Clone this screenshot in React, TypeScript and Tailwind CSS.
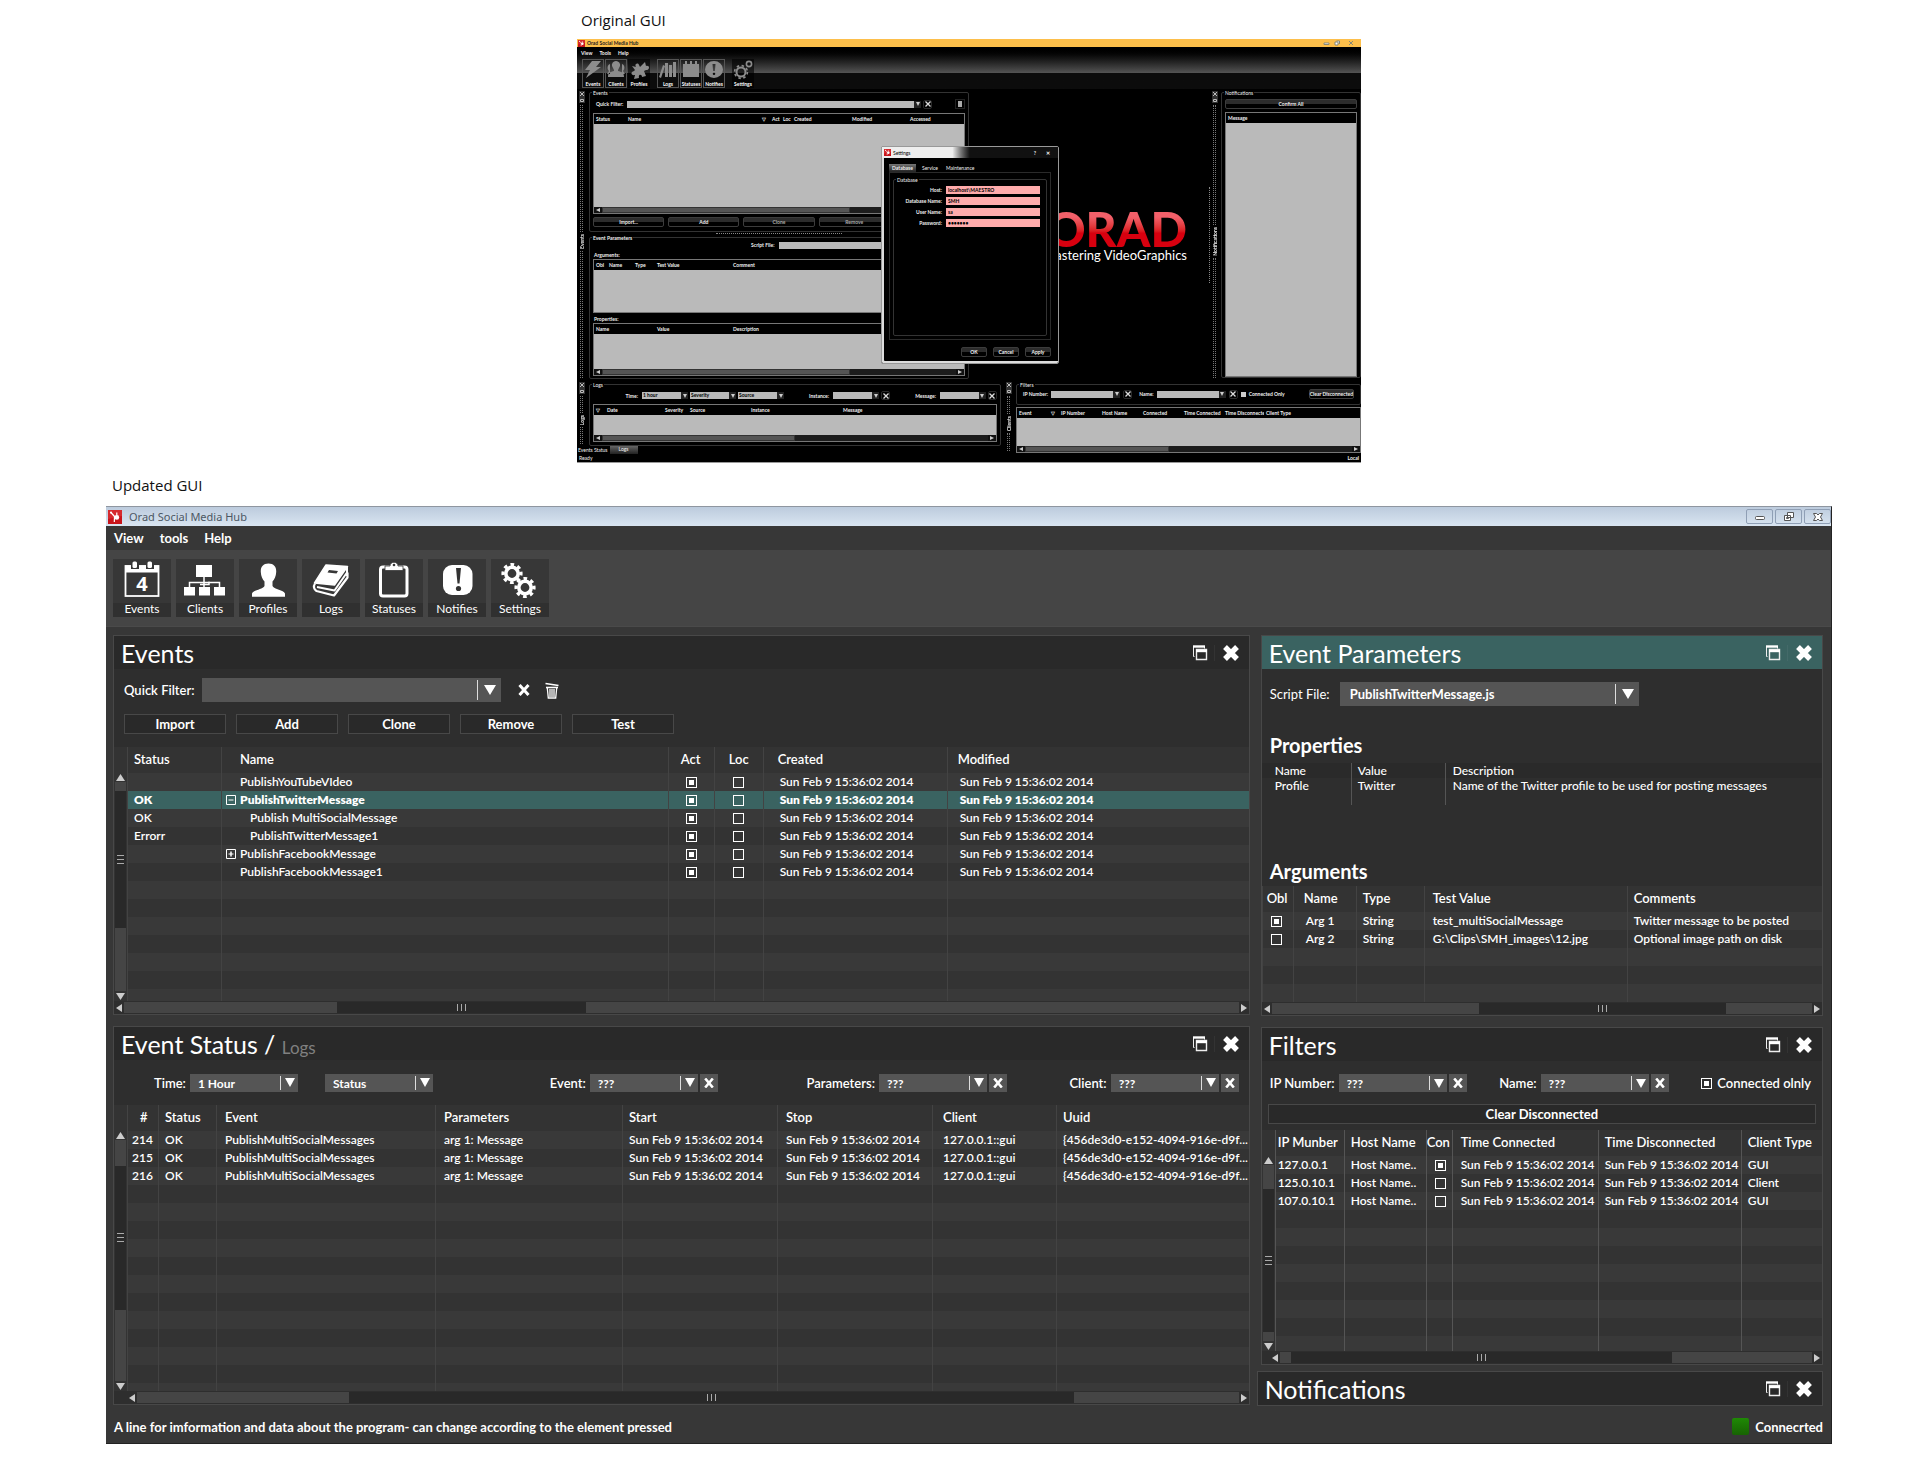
import React from "react";
import clsx from "clsx";

const STAMP = "Sun Feb 9 15:36:02 2014";

/* ---------- shared bits ---------- */

const Triangle: React.FC<{ dir: "up" | "down" | "left" | "right"; className?: string }> = ({ dir, className }) => {
  const points = {
    up: "0,10 5,0 10,10",
    down: "0,0 10,0 5,10",
    left: "10,0 10,10 0,5",
    right: "0,0 10,5 0,10",
  };
  return (
    <svg viewBox="0 0 10 10" preserveAspectRatio="none" className={clsx("shrink-0 fill-current", className)}>
      <polygon points={points[dir]} />
    </svg>
  );
};

const BrandIcon: React.FC<{ className?: string }> = ({ className }) => (
  <svg viewBox="0 0 14 14" className={className}>
    <rect width="14" height="14" fill="#c8141b" />
    <path d="M0 0h14v6L0 9z" fill="#e0393c" opacity=".6" />
    <path d="M3 2.5l3.5 4M6.500 6.500l-.2 5.500M8.800 2.500v3M6 6.500h2" stroke="#fff" strokeWidth="1.2" fill="none" />
    <circle cx="8.8" cy="7.4" r="2.4" fill="#fff" />
    <circle cx="3" cy="2.6" r="1.1" fill="#fff" />
  </svg>
);

const Combo: React.FC<{ id: string; label: string; value: string; className?: string; big?: boolean }> = ({
  id,
  label,
  value,
  className,
  big,
}) => (
  <div className={clsx("relative bg-[#555]", big ? "h-6" : "h-[18px]", className)}>
    <select
      id={id}
      aria-label={label}
      className={clsx(
        "block size-full appearance-none truncate bg-transparent pr-6 font-bold text-white outline-none",
        big ? "pl-2.5 text-[13px]" : "pl-2 text-[12px]"
      )}
    >
      <option>{value}</option>
    </select>
    <span
      className={clsx(
        "pointer-events-none absolute inset-y-0.5 right-0 flex items-center border-l border-[#ddd] text-white",
        big ? "w-6 pl-1.5" : "w-[18px] pl-1"
      )}
    >
      <Triangle dir="down" className={big ? "h-[10px] w-[12px]" : "h-[9px] w-[10px]"} />
    </span>
  </div>
);

const ClearButton: React.FC<{ label: string }> = ({ label }) => (
  <button aria-label={label} className="ml-0.5 flex h-[18px] w-[18px] items-center justify-center bg-[#555]">
    <svg viewBox="0 0 10 10" className="size-[10px]" stroke="#fff" strokeWidth="2.6">
      <path d="M1.2 .5l7.6 9M8.8 .5l-7.6 9" />
    </svg>
  </button>
);

const FilterField: React.FC<{ id: string; label: string }> = ({ id, label }) => (
  <div className="flex items-center">
    <label htmlFor={id} className="mr-1 text-[13px] leading-[18px] font-semibold whitespace-nowrap">
      {label}:
    </label>
    <Combo id={id} label={label} value="???" className="w-[108px]" />
    <ClearButton label={`Clear ${label}`} />
  </div>
);

const Check: React.FC<{ on?: boolean; label?: string; id?: string }> = ({ on, label, id }) => (
  <input
    id={id}
    type="checkbox"
    aria-label={label}
    defaultChecked={on}
    className="block size-[11px] appearance-none border border-white bg-clip-content p-[2px] checked:bg-white"
  />
);

const VScroll: React.FC<{ before: string; thumb: string; after: string }> = ({ before, thumb, after }) => (
  <div className="flex w-[13px] shrink-0 flex-col items-center px-px text-[#ccc]">
    <div className="h-[26px]" />
    <div className="flex h-[9px] items-center">
      <Triangle dir="up" className="h-[7px] w-[9px]" />
    </div>
    <div className={clsx("w-full bg-[#454545]", before)} />
    <div className={clsx("flex w-full flex-col items-center justify-center gap-[3px] bg-[#292929]", thumb)}>
      <i className="h-px w-[7px] bg-[#aaa]" />
      <i className="h-px w-[7px] bg-[#aaa]" />
      <i className="h-px w-[7px] bg-[#aaa]" />
    </div>
    <div className={clsx("w-full bg-[#454545]", after)} />
    <div className="flex h-[10px] items-center">
      <Triangle dir="down" className="h-[7px] w-[9px]" />
    </div>
  </div>
);

const HScroll: React.FC<{ before: string; thumb: string; after: string; className?: string }> = ({
  before,
  thumb,
  after,
  className,
}) => (
  <div className={clsx("mt-px mb-px flex h-[11px] items-center text-[#ccc]", className)}>
    <Triangle dir="left" className="mx-0.5 h-[8px] w-[6px]" />
    <div className={clsx("h-full bg-[#454545]", before)} />
    <div className={clsx("flex h-full items-center justify-center gap-[3px] bg-[#292929]", thumb)}>
      <i className="h-[7px] w-px bg-[#aaa]" />
      <i className="h-[7px] w-px bg-[#aaa]" />
      <i className="h-[7px] w-px bg-[#aaa]" />
    </div>
    <div className={clsx("h-full bg-[#454545]", after)} />
    <Triangle dir="right" className="mx-0.5 h-[8px] w-[6px]" />
  </div>
);

const Panel: React.FC<{ title: React.ReactNode; active?: boolean; children?: React.ReactNode }> = ({
  title,
  active,
  children,
}) => (
  <section className="border border-[#484848] bg-[#2e2e2e]">
    <header className={clsx("flex h-[33px] items-center justify-between pr-2.5 pl-[7px]", active ? "bg-[#3a6361]" : "bg-[#292929]")}>
      <h2 className="text-[25px] leading-8 whitespace-nowrap">{title}</h2>
      <div className="flex items-center gap-1.5">
        <button aria-label="Restore">
          <svg viewBox="0 0 16 16" className="size-4" fill="none" stroke="#eee">
            <path d="M2.5 11.5h-1v-10h11v2" />
            <path d="M1 1.5h12" strokeWidth="2.4" stroke="#fff" />
            <path d="M4.5 4.5h10v10h-10z" strokeWidth="1.4" />
            <path d="M4 6h11" strokeWidth="2.4" stroke="#fff" />
          </svg>
        </button>
        <button aria-label="Close" className="border-l border-[#ffffff0d] pl-2">
          <svg viewBox="0 0 16 16" className="size-4" stroke="#fff" strokeWidth="5.4">
            <path d="M2 2l12 12M14 2L2 14" />
          </svg>
        </button>
      </div>
    </header>
    {children}
  </section>
);

type Column = { title: string; width?: string; pad?: string; head?: string };

type GridProps = {
  columns: Column[];
  rows: React.ReactNode[][];
  blank: number;
  tail?: string;
  selected?: number;
  strong?: boolean;
};

const GridTable: React.FC<GridProps> = ({ columns, rows, blank, tail, selected, strong }) => {
  const line = strong ? "border-[#555]" : "border-[#434343]";
  return (
    <table className="w-full table-fixed border-separate border-spacing-0 text-left">
      <colgroup>
        {columns.map((c, i) => (
          <col key={i} className={c.width} />
        ))}
      </colgroup>
      <thead>
        <tr className="h-[26px] bg-[#333]">
          {columns.map((c, i) => (
            <th
              key={i}
              className={clsx("border-l p-0 pb-0.5 text-[13px] leading-5 font-semibold whitespace-nowrap", line, c.head ?? c.pad)}
            >
              {c.title}
            </th>
          ))}
        </tr>
      </thead>
      <tbody className="text-[12px] leading-[18px]">
        {rows.map((row, r) => (
          <tr
            key={r}
            className={clsx(
              "h-[18px]",
              r === selected ? "bg-[#3a6361] font-extrabold" : "font-semibold odd:bg-[#393939] even:bg-[#333]"
            )}
          >
            {row.map((cell, i) => (
              <td key={i} className={clsx("border-l p-0 whitespace-nowrap", line, columns[i].pad)}>
                {cell}
              </td>
            ))}
          </tr>
        ))}
        {Array.from({ length: blank }, (_, r) => (
          <tr key={`blank-${r}`} className="h-[18px] odd:bg-[#393939] even:bg-[#333]">
            {columns.map((_, i) => (
              <td key={i} className={clsx("border-l p-0", line)} />
            ))}
          </tr>
        ))}
        {tail && (
          <tr className={clsx("odd:bg-[#393939] even:bg-[#333]", tail)}>
            {columns.map((_, i) => (
              <td key={i} className={clsx("border-l p-0", line)} />
            ))}
          </tr>
        )}
      </tbody>
    </table>
  );
};

/* ---------- toolbar icons, drawn on a 58x44 tile ---------- */

const gear = (cx: number, cy: number) => (
  <g fill="none" stroke="#fff">
    <circle cx={cx} cy={cy} r="6.2" strokeWidth="3.6" />
    <circle cx={cx} cy={cy} r="9" strokeWidth="3.2" strokeDasharray="3.53 3.54" transform={`rotate(-11 ${cx} ${cy})`} />
  </g>
);

const icons: Record<string, React.ReactNode> = {
  Events: (
    <>
      <rect x="12.5" y="7" width="33" height="30" fill="none" stroke="#fff" strokeWidth="1.8" />
      <path d="M12 6.500h34v7H12z" fill="#fff" />
      <path d="M18 3h8v7h-8zM33 3h8v7h-8z" fill="#373737" />
      <rect x="19.500" y="2.500" width="4.500" height="6.500" rx="1.500" fill="#fff" />
      <rect x="34.500" y="2.500" width="4.500" height="6.500" rx="1.500" fill="#fff" />
      <text x="29" y="32" textAnchor="middle" fontSize="20" fontWeight="700" fontFamily="Open Sans, sans-serif" fill="#fff">
        4
      </text>
    </>
  ),
  Clients: (
    <g fill="#fff">
      <path d="M20 6h16v12H20zM8 28h11v8.500H8zM23 28h11v8.500H23zM38 28h11v8.500H38z" />
      <path d="M28 18v10M13.500 28v-4.500h30V28M24 25.500h9v-3" stroke="#fff" strokeWidth="1.500" fill="none" />
    </g>
  ),
  Profiles: (
    <path
      d="M29.500 4.500c5.500 0 8 3.500 7.700 8.500-.2 4-1.700 7.500-3.700 9.500v4.500c2 3.500 11 4 12.500 7.500v3.200H13V34.500c1.500-3.500 10.500-4 12.500-7.500v-4.500c-2-2-3.500-5.500-3.700-9.500-.3-5 2.200-8.500 7.700-8.500z"
      fill="#fff"
    />
  ),
  Logs: (
    <g strokeLinejoin="round">
      <path d="M24 6l21.500 1.500-13 18.500L12.500 24z" fill="#fff" stroke="#fff" strokeWidth="1.500" />
      <path d="M27 11l9 1-1.500 2.500-9-1z" fill="#373737" />
      <path d="M13 24.500c-2 3-1 6 1.500 7.500L32 36.500l13.500-18v-5" fill="none" stroke="#fff" strokeWidth="2.200" />
      <path d="M15 28l17.500 3.500L45 13.500M45 8v9" fill="none" stroke="#fff" strokeWidth="2" />
    </g>
  ),
  Statuses: (
    <>
      <rect x="15.500" y="8" width="26.500" height="29" rx="2.500" fill="none" stroke="#fff" strokeWidth="3" />
      <path d="M20 7h5c0-5 8-5 8 0h5v4.500H20z" fill="#fff" stroke="#373737" strokeWidth=".8" />
      <circle cx="29" cy="6" r="1.300" fill="#373737" />
    </>
  ),
  Notifies: (
    <>
      <rect x="15" y="6" width="29.500" height="30" rx="9" fill="#fff" />
      <path d="M28 9h5l-1.500 15.500h-2z" fill="#333" />
      <circle cx="30.500" cy="29.500" r="2.600" fill="#333" />
    </>
  ),
  Settings: (
    <>
      {gear(21, 14.5)}
      {gear(34, 28.5)}
    </>
  ),
};

/* ---------- updated GUI ---------- */

const eventRows: [string, string, "leaf" | "open" | "closed" | "child"][] = [
  ["", "PublishYouTubeVIdeo", "leaf"],
  ["OK", "PublishTwitterMessage", "open"],
  ["OK", "Publish MultiSocialMessage", "child"],
  ["Errorr", "PublishTwitterMessage1", "child"],
  ["", "PublishFacebookMessage", "closed"],
  ["", "PublishFacebookMessage1", "leaf"],
];

const TreeName: React.FC<{ name: string; kind: string }> = ({ name, kind }) => (
  <div className={clsx("flex items-center", kind === "child" && "pl-2.5")}>
    <span className="w-[14px]">
      {(kind === "open" || kind === "closed") && (
        <button aria-label={`Toggle ${name}`} className="block">
          <svg viewBox="0 0 10 10" className="size-[10px]" fill="none" stroke="#fff">
            <path d="M.5 .5h9v9h-9zM2.500 5h5" />
            {kind === "closed" && <path d="M5 2.500v5" strokeWidth="1.500" />}
          </svg>
        </button>
      )}
    </span>
    {name}
  </div>
);

const EventsPanel: React.FC = () => (
  <Panel title="Events">
    <div className="h-[78px] px-2.5 pt-[9px]">
      <div className="flex items-center">
        <label htmlFor="quick-filter" className="w-[78px] text-[13px] font-semibold whitespace-nowrap">
          Quick Filter:
        </label>
        <Combo id="quick-filter" label="Quick Filter" value="" big className="w-[299px]" />
        <button aria-label="Clear filter" className="ml-[17px]">
          <svg viewBox="0 0 12 12" className="size-3" stroke="#fff" strokeWidth="3">
            <path d="M1.500 1l9 10M10.500 1l-9 10" />
          </svg>
        </button>
        <button aria-label="Delete" className="ml-[15px]">
          <svg viewBox="0 0 14 17" className="h-[17px] w-[14px]" fill="none" stroke="#fff">
            <path d="M.5 1.500l13 2" strokeWidth="1.600" />
            <path d="M1 5.500h12" strokeWidth="1.600" />
            <path d="M2.300 6l1 10h7.400l1-10M5 7v8M7 7v8M9 7v8" strokeWidth="1.300" />
          </svg>
        </button>
      </div>
      <div className="mt-3 flex gap-2.5">
        {["Import", "Add", "Clone", "Remove", "Test"].map((b) => (
          <button key={b} className="h-5 w-[102px] border border-[#484848] bg-[#292929] text-[13px] leading-4 font-bold">
            {b}
          </button>
        ))}
      </div>
    </div>
    <div className="flex bg-[#333]">
      <VScroll before="grow-[9]" thumb="grow-[134]" after="grow-[66]" />
      <GridTable
        selected={1}
        blank={6}
        tail="h-3"
        columns={[
          { title: "Status", width: "w-[94px]", pad: "pl-1.5" },
          { title: "Name", pad: "pl-1", head: "pl-[18px]" },
          { title: "Act", width: "w-[46px]", pad: "pl-[17px]", head: "pl-3" },
          { title: "Loc", width: "w-[49px]", pad: "pl-[18px]", head: "pl-3.5" },
          { title: "Created", width: "w-[184px]", pad: "pl-4", head: "pl-3.5" },
          { title: "Modified", width: "w-[302px]", pad: "pl-3", head: "pl-2.5" },
        ]}
        rows={eventRows.map(([status, name, kind]) => [
          status,
          <TreeName name={name} kind={kind} />,
          <Check on label={`${name} act`} />,
          <Check label={`${name} loc`} />,
          STAMP,
          STAMP,
        ])}
      />
    </div>
    <HScroll before="grow-[215]" thumb="grow-[242]" after="grow-[659]" />
  </Panel>
);

const StatusPanel: React.FC = () => (
  <Panel
    title={
      <>
        Event Status /{" "}
        <a href="#logs" className="text-[17px] leading-none text-[#808080]">
          Logs
        </a>
      </>
    }
  >
    <div className="flex h-[45px] items-center pr-2.5 pl-10">
      <label htmlFor="time" className="mr-1 text-[13px] leading-[18px] font-semibold">
        Time:
      </label>
      <Combo id="time" label="Time" value="1 Hour" className="w-[108px]" />
      <Combo id="status" label="Status" value="Status" className="ml-[27px] w-[108px]" />
      <span className="grow-[116]" />
      <FilterField id="event" label="Event" />
      <span className="grow-[88]" />
      <FilterField id="parameters" label="Parameters" />
      <span className="grow-[62]" />
      <FilterField id="client" label="Client" />
    </div>
    <div className="flex bg-[#333]">
      <VScroll before="grow-[27]" thumb="grow-[141]" after="grow-[74]" />
      <GridTable
        blank={11}
        tail="h-2"
        columns={[
          { title: "#", width: "w-[31px]", pad: "pl-1", head: "pl-3" },
          { title: "Status", width: "w-[58px]", pad: "pl-1.5" },
          { title: "Event", width: "w-[219px]", pad: "pl-2" },
          { title: "Parameters", width: "w-[187px]", pad: "pl-2" },
          { title: "Start", width: "w-[155px]", pad: "pl-1.5" },
          { title: "Stop", width: "w-[155px]", pad: "pl-2" },
          { title: "Client", width: "w-[124px]", pad: "pl-2.5" },
          { title: "Uuid", pad: "pl-1.5" },
        ]}
        rows={["214", "215", "216"].map((n) => [
          n,
          "OK",
          "PublishMultiSocialMessages",
          "arg 1: Message",
          STAMP,
          STAMP,
          "127.0.0.1::gui",
          "{456de3d0-e152-4094-916e-d9f...",
        ])}
      />
    </div>
    <HScroll before="grow-[215]" thumb="grow-[725]" after="grow-[167]" className="pl-[13px]" />
  </Panel>
);

const ParametersPanel: React.FC = () => (
  <Panel title="Event Parameters" active>
    <div className="h-[217px] pt-[13px]">
      <div className="flex items-center pl-2">
        <label htmlFor="script-file" className="w-[70px] text-[13px] whitespace-nowrap">
          Script File:
        </label>
        <Combo id="script-file" label="Script File" value="PublishTwitterMessage.js" big className="w-[299px]" />
      </div>
      <h3 className="mt-[27px] pl-2 text-[20px] leading-6 font-bold">Properties</h3>
      <table className="mt-1.5 w-full table-fixed border-separate border-spacing-0 text-left text-[12px] leading-[15px] font-medium">
        <colgroup>
          <col className="w-[89px]" />
          <col className="w-[94px]" />
          <col />
        </colgroup>
        <thead>
          <tr className="bg-[#2a2a2a]">
            <th className="p-0 pl-[13px] font-medium">Name</th>
            <th className="border-l border-[#555] p-0 pl-1.5 font-medium">Value</th>
            <th className="border-l border-[#555] p-0 pl-[7px] font-medium">Description</th>
          </tr>
        </thead>
        <tbody>
          <tr className="h-[27px] align-top">
            <td className="p-0 pl-[13px]">Profile</td>
            <td className="border-l border-[#555] p-0 pl-1.5">Twitter</td>
            <td className="border-l border-[#555] p-0 pl-[7px]">Name of the Twitter profile to be used for posting messages</td>
          </tr>
        </tbody>
      </table>
      <h3 className="mt-[54px] pl-2 text-[20px] leading-6 font-bold">Arguments</h3>
    </div>
    <GridTable
      blank={3}
      columns={[
        { title: "Obl", width: "w-[31px]", pad: "pl-2", head: "pl-1" },
        { title: "Name", width: "w-[63px]", pad: "pl-3", head: "pl-2.5" },
        { title: "Type", width: "w-[68px]", pad: "pl-1.5" },
        { title: "Test Value", width: "w-[203px]", pad: "pl-2" },
        { title: "Comments", pad: "pl-1.5" },
      ]}
      rows={[
        [<Check on label="Arg 1 obligatory" />, "Arg 1", "String", "test_multiSocialMessage", "Twitter message to be posted"],
        [<Check label="Arg 2 obligatory" />, "Arg 2", "String", "G:\\Clips\\SMH_images\\12.jpg", "Optional image path on disk"],
      ]}
    />
    <HScroll before="grow-[211]" thumb="grow-[242]" after="grow-[88]" />
  </Panel>
);

const FiltersPanel: React.FC = () => (
  <Panel title="Filters">
    <div className="h-[69px] pt-[13px] pr-1.5 pl-1.5">
      <div className="flex items-center justify-between pr-[5px] pl-0.5">
        <FilterField id="ip-number" label="IP Number" />
        <FilterField id="client-name" label="Name" />
        <div className="flex items-center gap-[5px]">
          <Check on id="connected-only" />
          <label htmlFor="connected-only" className="text-[13px] leading-[18px] font-semibold whitespace-nowrap">
            Connected olnly
          </label>
        </div>
      </div>
      <button className="mt-3 h-5 w-full border border-[#484848] bg-[#292929] text-[13px] leading-4 font-bold">
        Clear Disconnected
      </button>
    </div>
    <div className="flex bg-[#333]">
      <VScroll before="grow-[25]" thumb="grow-[142]" after="grow-[10]" />
      <GridTable
        strong
        blank={7}
        tail="h-[15px]"
        columns={[
          { title: "IP Munber", width: "w-[69px]", pad: "pl-0.5" },
          { title: "Host Name", width: "w-[82px]", pad: "pl-1.5" },
          { title: "Con", width: "w-[26px]", pad: "pl-2", head: "pl-0" },
          { title: "Time Connected", width: "w-[146px]", pad: "pl-2" },
          { title: "Time Disconnected", width: "w-[143px]", pad: "pl-1.5" },
          { title: "Client Type", pad: "pl-1.5" },
        ]}
        rows={[
          ["127.0.0.1", "Host Name..", <Check on label="127.0.0.1 connected" />, STAMP, STAMP, "GUI"],
          ["125.0.10.1", "Host Name..", <Check label="125.0.10.1 connected" />, STAMP, STAMP, "Client"],
          ["107.0.10.1", "Host Name..", <Check label="107.0.10.1 connected" />, STAMP, STAMP, "GUI"],
        ]}
      />
    </div>
    <HScroll before="grow-[12]" thumb="grow-[378]" after="grow-[142]" className="pl-2" />
  </Panel>
);

const UpdatedGui: React.FC = () => (
  <div className="border-t border-r border-b border-t-[#8f96a0] border-r-[#222] border-b-[#222] bg-[#373737] font-['Lato',sans-serif] text-white">
    <div className="flex h-[19px] items-center justify-between bg-linear-to-b from-[#bccbdd] to-[#d9e5f1] pl-0.5">
      <div className="flex items-center gap-[7px]">
        <BrandIcon className="size-[14px]" />
        <span className="font-['Noto_Sans',sans-serif] text-[11px] leading-4 text-[#4c5763]">Orad Social Media Hub</span>
      </div>
      <div className="flex gap-0.5 text-[#555]">
        {["Minimize", "Restore", "Close"].map((b) => (
          <button key={b} aria-label={b} className="flex h-[15px] w-[27px] items-center justify-center rounded-xs border border-[#8f9fb5]">
            <svg viewBox="0 0 12 10" className="h-[10px] w-3" fill="#fff" stroke="#555">
              {b === "Minimize" && <rect x="1.500" y="4.500" width="9" height="3" rx="1" />}
              {b === "Restore" && <path d="M4.500 .5h6v5h-6zM1.500 3.500h6v5h-6zM3.500 5.500h2v1h-2z" />}
              {b === "Close" && <path d="M1.500 1.500h3L6 3l1.500-1.500h3L8.500 5l2 3.500h-3L6 7 4.500 8.500h-3l2-3.500z" />}
            </svg>
          </button>
        ))}
      </div>
    </div>
    <nav className="flex h-6 items-center gap-4 pl-2 text-[13px] font-bold">
      <a href="#view">View</a>
      <a href="#tools">tools</a>
      <a href="#help">Help</a>
    </nav>
    <div className="flex h-[77px] gap-[5px] border-b border-[#4a4a4a] bg-[#454545] pt-[9px] pl-[7px]">
      {Object.keys(icons).map((name) => (
        <button key={name} className="flex size-[58px] flex-col bg-[#373737]">
          <svg viewBox="0 0 58 44" className="h-11 w-[58px]">
            {icons[name]}
          </svg>
          <span className="block h-[14px] w-full bg-[#303030] text-center text-[12px] leading-3">{name}</span>
        </button>
      ))}
    </div>
    <div className="grid grid-cols-[1138fr_567fr] gap-[7px] pt-2 pr-2 pl-[7px]">
      <div className="flex min-w-0 flex-col gap-[11px]">
        <EventsPanel />
        <StatusPanel />
      </div>
      <div className="flex min-w-0 flex-col gap-1.5">
        <div className="flex flex-col gap-[11px] pl-1">
          <ParametersPanel />
          <FiltersPanel />
        </div>
        <Panel title="Notifications" />
      </div>
    </div>
    <footer className="flex h-[37px] items-center justify-between pt-1 pr-2 pl-2 text-[13px] font-bold">
      <p>A line for imformation and data about the program- can change according to the element pressed</p>
      <p className="flex items-center gap-1.5">
        <i className="h-[17px] w-[17px] rounded-xs bg-linear-to-b from-[#1f8a05] to-[#176303]" />
        Connecrted
      </p>
    </footer>
  </div>
);

/* ---------- original GUI (small preview) ---------- */

const Group: React.FC<{ title: string; className?: string; children?: React.ReactNode }> = ({ title, className, children }) => (
  <fieldset className={clsx("relative min-w-0 rounded-xs border border-[#333]", className)}>
    <legend className="absolute -top-1 left-0.5 bg-black px-px leading-2">{title}</legend>
    {children}
  </fieldset>
);

const MiniScroll: React.FC<{ thumb: string }> = ({ thumb }) => (
  <div className="flex h-[6px] items-center bg-[#111] text-[#ccc]">
    <Triangle dir="left" className="mx-0.5 size-1" />
    <div className="flex h-full flex-1 bg-[#1c1c1c]">
      <div className={clsx("h-full border border-[#333] bg-[#555]", thumb)} />
    </div>
    <Triangle dir="right" className="mx-0.5 size-1" />
  </div>
);

const MiniTable: React.FC<{ heads: [string, string][]; body: string; thumb?: string; className?: string }> = ({
  heads,
  body,
  thumb,
  className,
}) => (
  <div className={clsx("overflow-hidden border border-[#777]", className)}>
    <table className="w-full table-fixed text-left">
      <thead>
        <tr className="h-[10px] bg-black leading-2">
          {heads.map(([h, w], i) => (
            <th key={i} className={clsx("overflow-hidden p-0 pl-0.5 font-bold whitespace-nowrap", w)}>
              {h}
            </th>
          ))}
        </tr>
      </thead>
      <tbody>
        <tr className={clsx("bg-[#bababa]", body)}>
          <td colSpan={heads.length} className="p-0" />
        </tr>
      </tbody>
    </table>
    {thumb && <MiniScroll thumb={thumb} />}
  </div>
);

const MiniSelect: React.FC<{ label: string; value?: string; className?: string }> = ({ label, value = "", className }) => (
  <div className={clsx("flex h-[7px]", className)}>
    <select aria-label={label} className="min-w-0 flex-1 appearance-none bg-[#bababa] pl-px leading-[7px] font-bold text-black">
      <option>{value}</option>
    </select>
    <span className="flex w-[7px] items-center justify-center bg-[#222] text-[#ccc]">
      <Triangle dir="down" className="size-1" />
    </span>
  </div>
);

const MiniX: React.FC = () => (
  <button aria-label="Clear" className="flex h-[9px] w-[9px] items-center justify-center rounded-xs border border-[#2a2a2a]">
    <svg viewBox="0 0 6 6" className="size-[6px]" stroke="#ddd" strokeWidth="1.300">
      <path d="M.5 .5l5 5M5.500 .5l-5 5" />
    </svg>
  </button>
);

const MiniButton: React.FC<{ children: React.ReactNode; className?: string; dim?: boolean }> = ({ children, className, dim }) => (
  <button
    className={clsx(
      "h-[10px] rounded-xs border border-[#3c3c3c] bg-linear-to-b from-[#2c2c2c] from-50% to-black to-50% leading-2 font-bold",
      dim && "text-[#aaa]",
      className
    )}
  >
    {children}
  </button>
);

const Dock: React.FC<{ title: string; className?: string }> = ({ title, className }) => (
  <div className={clsx("flex w-[9px] shrink-0 flex-col items-center gap-0.5 py-0.5", className)}>
    <svg viewBox="0 0 6 12" className="h-3 w-1.5 bg-[#333]" fill="none" stroke="#bbb">
      <path d="M1 1l4 4M5 1L1 5M1.500 8.500h3v2h-3z" />
    </svg>
    <i className="w-[3px] flex-1 border-x border-dotted border-[#777]" />
    <span className="rotate-180 leading-2 font-bold [writing-mode:vertical-rl]">{title}</span>
    <i className="w-[3px] flex-1 border-x border-dotted border-[#777]" />
  </div>
);

const miniIcons: [string, React.ReactNode][] = [
  ["Events", <path d="M9 1h9l-5 6h5L3 18l4-8H2z" />],
  [
    "Clients",
    <path d="M10 1a4 4 0 014 5l-2 4v1c3 1 6 1 6 6H2c0-5 3-5 6-6v-1L6 6a4 4 0 014-5zM4 4c-3 1-3 5-1 7l-2 3h3zM16 4c3 1 3 5 1 7l2 3h-3z" />,
  ],
  [
    "Profiles",
    <path d="M3 6l4 1c-2-3 2-5 3-2l1 2 5-5 1 4c4-1 4 4 0 4l-2 1 2 5-4 1c0-3-4-3-3 1l-5 1 1-4c-4 1-5-3-1-4l1-1z" />,
  ],
  ["Logs", <path d="M1 17L5 5l2 1-4 12zM7 3h3v14H7zM11 5h3v12h-3zM15 2h3v15h-3z" />],
  ["Statuses", <path d="M2 4h16v13H2zM4 1h2v4H4zM9 1h2v4H9zM14 1h2v4h-2z" />],
  ["Notifies", <path fillRule="evenodd" d="M10 1a9 8.500 0 110 17 9 8.500 0 010-17zM8.500 4l.6 7h1.800l.6-7zM10 12.500a1.200 1.200 0 100 2.500 1.200 1.200 0 000-2.500z" />],
  [
    "Settings",
    <g fill="none" stroke="currentColor">
      <circle cx="8" cy="12" r="4.500" strokeWidth="2" />
      <circle cx="8" cy="12" r="6.400" strokeWidth="1.600" strokeDasharray="2.500 2.500" />
      <circle cx="16" cy="4" r="2.600" strokeWidth="1.600" />
    </g>,
  ],
];

const SettingsDialog: React.FC = () => (
  <div className="absolute top-[107px] left-[304px] flex h-[218px] w-[178px] flex-col rounded-xs border border-[#999] bg-black px-0.5 pb-0.5 shadow-[inset_2px_-2px_0_#ddd]">
    <div className="-mx-0.5 flex h-[11px] items-center justify-between bg-linear-to-r from-[#eee] from-40% to-[#111] to-50% pr-2 pl-0.5">
      <div className="flex items-center gap-0.5 leading-2 text-black">
        <BrandIcon className="size-[7px]" />
        Settings
      </div>
      <div className="flex gap-2.5 font-bold">
        <span>?</span>
        <span>✕</span>
      </div>
    </div>
    <div className="flex flex-1 flex-col px-[5px] pt-1.5 pb-1">
      <div className="flex gap-1 leading-2">
        <button className="w-[27px] bg-linear-to-b from-[#777] to-[#222] font-bold">Database</button>
        <button className="px-0.5">Service</button>
        <button className="px-0.5">Maintenance</button>
      </div>
      <div className="flex flex-1 flex-col border border-[#2a2a2a] p-[3px] pt-[6px]">
        <Group title="Database" className="flex-1 px-1.5 pt-1">
          {[
            ["Host:", "localhost\\MAESTRO", "text"],
            ["Database Name:", "SMH", "text"],
            ["User Name:", "sa", "text"],
            ["Password:", "maestro", "password"],
          ].map(([label, value, type]) => (
            <div key={label} className="flex h-[11px] items-center gap-1 font-bold">
              <label htmlFor={label} className="flex-1 text-right whitespace-nowrap">
                {label}
              </label>
              <input id={label} type={type} defaultValue={value} className="h-2 w-[94px] bg-[#ffabab] pl-0.5 text-black" />
            </div>
          ))}
        </Group>
      </div>
      <div className="mt-[7px] flex justify-end gap-1.5">
        <MiniButton className="w-[26px]">OK</MiniButton>
        <MiniButton className="w-[26px]">Cancel</MiniButton>
        <MiniButton className="w-[26px]">Apply</MiniButton>
      </div>
    </div>
  </div>
);

const OriginalGui: React.FC = () => (
  <div className="relative w-[784px] bg-black font-['Lato',sans-serif] text-[5px] leading-2 text-[#f2f2f2]">
    <div className="flex h-2 items-center justify-between bg-[#fdbf4b] pr-1 pl-px text-[#222]">
      <div className="flex items-center gap-0.5 font-bold">
        <BrandIcon className="size-[7px]" />
        Orad Social Media Hub
      </div>
      <svg viewBox="0 0 36 6" className="h-1.5 w-9" fill="#fff" stroke="#887">
        <path d="M3 3h5v1.500H3zM14 2h3v3h-3zM15.500 1h3v3M28 1l4 4M32 1l-4 4" />
      </svg>
    </div>
    <div className="bg-linear-to-b from-black to-[#555] to-62%">
      <nav className="flex h-[11px] items-center gap-[7px] pl-1 font-bold">
        <a href="#view-original">View</a>
        <a href="#tools-original">Tools</a>
        <a href="#help-original">Help</a>
      </nav>
      <div className="flex h-[31px] gap-px bg-linear-to-b from-transparent from-50% to-[#0c0c0c] to-50% pt-px pl-[5px]">
        {miniIcons.map(([name, icon], i) => (
          <button
            key={name}
            className={clsx(
              "flex h-[29px] w-[22px] flex-col items-center border font-bold text-[#8c8c8c]",
              i === 2 || i === 6 ? "border-transparent bg-black/60" : "border-[#555]",
              (i === 3 || i === 6) && "ml-1.5"
            )}
          >
            <svg viewBox="0 0 20 20" className="h-5 w-5 shrink-0 fill-current">
              {icon}
            </svg>
            <span className="leading-2 text-white">{name}</span>
          </button>
        ))}
      </div>
    </div>

    <div className="flex h-[291px]">
      <Dock title="Events" className="mr-[3px]" />
      <div className="w-[380px] pt-[3px]">
        <Group title="Events" className="h-[140px] px-[3px] pt-1.5">
          <div className="flex items-center pl-[3px]">
            <span className="w-[31px] font-bold">Quick Filter:</span>
            <MiniSelect label="Quick filter" className="w-[294px]" />
            <span className="ml-0.5">
              <MiniX />
            </span>
            <button aria-label="Delete" className="ml-auto flex size-[10px] items-center justify-center border border-[#222]">
              <i className="h-1.5 w-1 bg-[#aaa]" />
            </button>
          </div>
          <MiniTable
            className="mt-1"
            heads={[["Status", "w-8"], ["Name", ""], ["▽", "w-2.5"], ["Act", "w-[11px]"], ["Loc", "w-[11px]"], ["Created", "w-[58px]"], ["Modified", "w-[58px]"], ["Accessed", "w-14"]]}
            body="h-[83px]"
            thumb="w-[70%]"
          />
          <div className="mt-[3px] flex gap-1">
            <MiniButton className="flex-1">Import...</MiniButton>
            <MiniButton className="flex-1">Add</MiniButton>
            <MiniButton className="flex-1" dim>
              Clone
            </MiniButton>
            <MiniButton className="flex-1" dim>
              Remove
            </MiniButton>
            <MiniButton className="flex-1">Test</MiniButton>
          </div>
        </Group>
        <i className="mx-auto mt-px block w-[126px] border-t border-dotted border-[#888]" />
        <Group title="Event Parameters" className="mt-[3px] h-[142px] px-[3px] pt-[3px] font-bold">
          <div className="flex items-center pl-[158px]">
            <span className="w-7">Script File:</span>
            <MiniSelect label="Script" className="flex-1" />
          </div>
          <p className="pt-0.5 pl-px">Arguments:</p>
          <MiniTable heads={[["Obl", "w-[13px]"], ["Name", "w-[26px]"], ["Type", "w-[22px]"], ["Test Value", "w-[76px]"], ["Comment", ""]]} body="h-[42px]" />
          <p className="pt-0.5 pl-px">Properties:</p>
          <MiniTable heads={[["Name", "w-[61px]"], ["Value", "w-[76px]"], ["Description", ""]]} body="h-[35px]" thumb="w-[70%]" />
        </Group>
      </div>
      <div className="flex flex-1 flex-col items-end justify-center pr-[22px]">
        <strong className="bg-linear-to-b from-[#f2606a] from-20% to-[#d8000f] to-60% bg-clip-text text-[48px] leading-10 font-black text-transparent">
          ORAD
        </strong>
        <span className="text-[13px] leading-3 text-white">Mastering VideoGraphics</span>
      </div>
      <i className="h-24 self-center border-l border-dotted border-[#888]" />
      <Dock title="Notifications" />
      <Group title="Notifications" className="mt-[3px] mb-0.5 ml-0.5 w-[140px] px-[3px] pt-1.5">
        <MiniButton className="w-full">Confirm All</MiniButton>
        <MiniTable className="mt-[3px]" heads={[["Message", ""]]} body="h-[253px]" />
      </Group>
    </div>

    <div className="flex h-[73px]">
      <div className="w-[424px]">
        <div className="flex h-[66px]">
          <Dock title="Logs" className="mr-[3px]" />
          <Group title="Logs" className="mt-1 w-[412px] px-[3px] pt-1.5">
            <div className="flex items-center font-bold">
              <span className="w-[49px] pr-1 text-right">Time:</span>
              <MiniSelect label="Hours" value="1 hour" className="w-[46px]" />
              <MiniSelect label="Severity" value="Severity" className="ml-0.5 w-[46px]" />
              <MiniSelect label="Source" value="Source" className="ml-0.5 w-[46px]" />
              <span className="ml-auto pr-1">Instance:</span>
              <MiniSelect label="Instance" className="mr-0.5 w-[46px]" />
              <MiniX />
              <span className="ml-auto pr-1">Message:</span>
              <MiniSelect label="Message" className="mr-0.5 w-[46px]" />
              <MiniX />
            </div>
            <MiniTable
              className="mt-1"
              heads={[["▽", "w-[11px]"], ["Date", "w-[58px]"], ["Severity", "w-[25px]"], ["Source", "w-[61px]"], ["Instance", "w-[92px]"], ["Message", ""]]}
              body="h-5"
              thumb="w-1/2"
            />
          </Group>
        </div>
        <div className="flex gap-0.5 pl-px">
          <span>Events Status</span>
          <span className="w-7 bg-linear-to-b from-[#666] to-[#222] text-center leading-[7px]">Logs</span>
        </div>
      </div>
      <Dock title="Clients" className="mx-[3px]" />
      <div className="flex-1">
        <Group title="Filters" className="mt-1 h-[21px] px-1.5 pt-1">
          <div className="flex items-center gap-[3px] font-bold whitespace-nowrap">
            <span>IP Number:</span>
            <MiniSelect label="IP" className="w-[69px]" />
            <MiniX />
            <span className="pl-1">Name:</span>
            <MiniSelect label="Host" className="w-[69px]" />
            <MiniX />
            <input id="mini-connected" type="checkbox" className="size-[5px] appearance-none bg-[#ccc]" />
            <label htmlFor="mini-connected">Connected Only</label>
            <MiniButton className="ml-auto">Clear Disconnected</MiniButton>
          </div>
        </Group>
        <MiniTable
          className="mt-0.5"
          heads={[["Event", "w-8"], ["▽", "w-2.5"], ["IP Number", "w-[41px]"], ["Host Name", "w-[41px]"], ["Connected", "w-[41px]"], ["Time Connected", "w-[41px]"], ["Time Disconnected", "w-[41px]"], ["Client Type", ""]]}
          body="h-[28px]"
          thumb="w-[44%]"
        />
      </div>
    </div>

    <div className="flex h-[10px] items-center justify-between border-b border-[#999] px-0.5">
      <span>Ready</span>
      <span className="font-bold">Local</span>
    </div>
    <SettingsDialog />
  </div>
);

const App: React.FC = () => (
  <div className="min-h-screen bg-white pt-2.5 pr-[88px] pl-[106px] font-['Open_Sans',sans-serif] text-[15px] leading-5 text-[#111]">
    <div className="pl-[471px]">
      <h1 className="mb-[9px] pl-1">Original GUI</h1>
      <OriginalGui />
    </div>
    <h1 className="mt-3 mb-[11px] pl-1.5">Updated GUI</h1>
    <UpdatedGui />
  </div>
);

export default App;
